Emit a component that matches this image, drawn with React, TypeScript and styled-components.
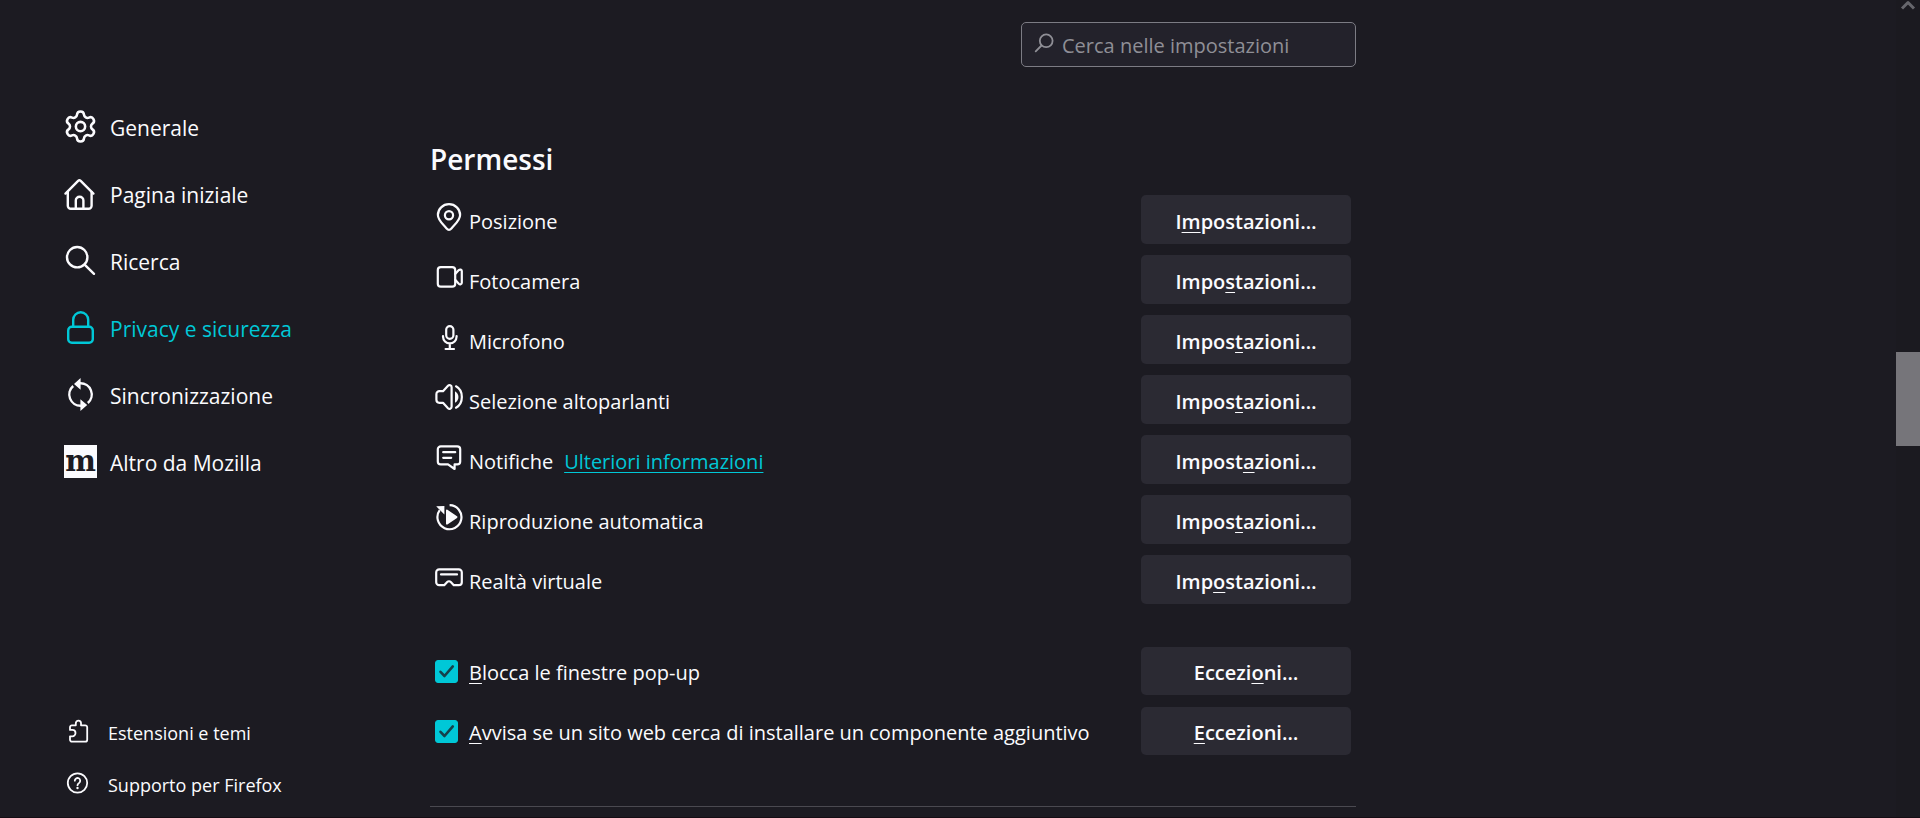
import React from "react";
import styled, { createGlobalStyle } from "styled-components";

const GlobalStyle = createGlobalStyle`
  *, *::before, *::after { box-sizing: border-box; }
  body {
    margin: 0;
    background: #1c1b22;
    color: #fbfbfe;
    font-family: "Open Sans", "Noto Sans", sans-serif;
    font-size: 20px;
    line-height: 28px;
  }
`;

const Page = styled.div`
  display: flex;
  min-height: 100vh;
  border-bottom: 1px solid #150d14;
`;

const Sidebar = styled.aside`
  flex: 0 0 430px;
  display: flex;
  flex-direction: column;
  justify-content: space-between;
  padding: 93px 24px 8px 64px;
`;

const NavList = styled.nav`
  display: flex;
  flex-direction: column;
`;

const NavItem = styled.a<{ $active?: boolean }>`
  display: flex;
  align-items: center;
  gap: 13px;
  height: 67px;
  color: ${(p) => (p.$active ? "#00c8d7" : "inherit")};
  font-size: 21px;
  text-decoration: none;
`;

const FooterItem = styled(NavItem)`
  gap: 18px;
  height: 52px;
  padding-left: 2px;
  font-size: 18px;
`;

const NavLabel = styled.span`
  padding-top: 3px;
`;

const Icon = styled.svg<{ $size: number; $weight?: number }>`
  flex: none;
  display: block;
  width: ${(p) => p.$size}px;
  height: ${(p) => p.$size}px;
  fill: none;
  stroke: currentColor;
  stroke-width: ${(p) => p.$weight ?? 2.4};
  stroke-linecap: round;
  stroke-linejoin: round;
  .solid { fill: currentColor; stroke: none; }
  .butt { stroke-linecap: butt; }
`;

const MozillaMark = styled.span`
  flex: none;
  display: flex;
  justify-content: center;
  width: 33px;
  height: 33px;
  background: #fbfbfe;
  color: #1c1b22;
  font: bold 29px/33px "DejaVu Serif", serif;
`;

const Main = styled.main`
  flex: 0 1 926px;
  min-width: 0;
`;

const TopBar = styled.header`
  display: flex;
  justify-content: flex-end;
  padding-top: 22px;
`;

const SearchBox = styled.label`
  display: flex;
  align-items: center;
  gap: 8px;
  width: 335px;
  height: 45px;
  padding: 0 12px;
  border: 1px solid #7c7c84;
  border-radius: 5px;
  background: #23222b;
  color: #8f8f96;
`;

const SearchIcon = styled(Icon)`
  margin-bottom: 4px;
`;

const SearchInput = styled.input`
  flex: 1;
  min-width: 0;
  padding: 2px 0 0;
  border: 0;
  outline: 0;
  background: transparent;
  color: #fbfbfe;
  font: inherit;
  &::placeholder { color: #8f8f96; opacity: 1; }
`;

const Heading = styled.h2`
  margin: 74px 0 18px;
  font-size: 28px;
  line-height: 36px;
  font-weight: 600;
`;

const Group = styled.section<{ $rowHeight: number }>`
  display: grid;
  grid-auto-rows: ${(p) => p.$rowHeight}px;
  row-gap: ${(p) => 60 - p.$rowHeight}px;
  padding: 0 5px;
  & + & { margin-top: 43px; }
`;

const Row = styled.div`
  display: flex;
  align-items: center;
  justify-content: space-between;
`;

const RowInfo = styled.div`
  display: flex;
  align-items: center;
  gap: 6px;
`;

const RowIcon = styled(Icon)`
  margin-bottom: 5px;
`;

const RowText = styled.span`
  padding-top: 4px;
`;

const MoreLink = styled.a`
  margin-left: 5px;
  padding-top: 4px;
  color: #00c8d7;
  text-decoration: underline;
  text-decoration-thickness: 1px;
  text-underline-offset: 3px;
  text-decoration-skip-ink: none;
`;

const AccessKey = styled.span`
  text-decoration: underline;
  text-decoration-thickness: 1px;
  text-underline-offset: 3px;
  text-decoration-skip-ink: none;
`;

const ActionButton = styled.button`
  flex: none;
  width: 210px;
  height: 100%;
  padding: 4px 0 0;
  border: 0;
  border-radius: 5px;
  background: #2b2a33;
  color: inherit;
  font: inherit;
  font-weight: 600;
`;

const CheckLabel = styled.label`
  display: flex;
  align-items: center;
  gap: 11px;
`;

const CheckFrame = styled.span`
  display: grid;
  width: 23px;
  height: 23px;
  & > * { grid-area: 1 / 1; }
`;

const CheckInput = styled.input`
  appearance: none;
  margin: 0;
  border-radius: 3px;
  border: 1px solid #8f8f9d;
  &:checked { background: #00c8d7; border-color: #00c8d7; }
  &:not(:checked) + svg { visibility: hidden; }
`;

const CheckMark = styled(Icon)`
  color: #15414b;
  pointer-events: none;
`;

const Divider = styled.hr`
  margin: 51px 0 0;
  border: 0;
  border-top: 1px solid #4a4950;
`;

const ScrollTrack = styled.div`
  display: flex;
  flex-direction: column;
  align-items: center;
  width: 24px;
  margin-left: auto;
  background: #1b1a20;
  color: #66666c;
`;

const ScrollSpacer = styled.div`
  flex: 334 0 0;
`;

const ScrollThumb = styled.div`
  flex: 94 0 0;
  width: 100%;
  background: #76757a;
`;

const ScrollRest = styled.div`
  flex: 371 0 0;
`;

const GearIcon = () => (
  <Icon $size={33} $weight={1.7} viewBox="1 1 22 22">
    <path d="M9.671 4.136a2.34 2.34 0 0 1 4.659 0 2.34 2.34 0 0 0 3.319 1.915 2.34 2.34 0 0 1 2.33 4.033 2.34 2.34 0 0 0 0 3.831 2.34 2.34 0 0 1-2.33 4.033 2.34 2.34 0 0 0-3.319 1.915 2.34 2.34 0 0 1-4.659 0 2.34 2.34 0 0 0-3.32-1.915 2.34 2.34 0 0 1-2.33-4.033 2.34 2.34 0 0 0 0-3.831A2.34 2.34 0 0 1 6.35 6.051a2.34 2.34 0 0 0 3.319-1.915" />
    <circle cx="12" cy="12" r="3.1" />
  </Icon>
);

const HomeIcon = () => (
  <Icon $size={33} viewBox="0 0 33 33">
    <path d="M1.5 16.6 14.1 3.9a1.9 1.9 0 0 1 2.6 0L29.4 16.6" />
    <path d="M3.8 15v13.8a3 3 0 0 0 3 3h17.8a3 3 0 0 0 3-3V15" />
    <path d="M11.8 31.8v-8.2a3.8 3.8 0 0 1 7.6 0v8.2" />
  </Icon>
);

const LensIcon = () => (
  <Icon $size={33} viewBox="0 0 33 33">
    <circle cx="13.2" cy="13.2" r="10.2" />
    <path d="m20.6 20.6 9.4 9.2" />
  </Icon>
);

const LockIcon = () => (
  <Icon $size={33} viewBox="0 0 33 33">
    <rect x="4.2" y="15.8" width="24.6" height="16" rx="3.6" />
    <path d="M9.2 15.8V8.8a7.5 7.5 0 0 1 15 0v7" />
  </Icon>
);

const SyncIcon = () => (
  <Icon $size={33} viewBox="0 0 33 33">
    <path className="butt" d="M9.2 8A11.2 11.2 0 0 0 17 27.7" />
    <path className="butt" d="M23.8 25A11.2 11.2 0 0 0 16 5.3" />
    <path className="solid" d="M10 5.9 16.6 0v11.8zM23.2 27.1 16.4 33V21.2z" />
  </Icon>
);

const PuzzleIcon = () => (
  <Icon $size={24} $weight={1.8} viewBox="0 0 24 24">
    <path d="M4 10V8.200a1.900 1.900 0 0 1 1.900-1.900h3.900V4.200a2.600 2.600 0 0 1 5.200 0v2.100h4.200a2 2 0 0 1 2 2v12.400a2 2 0 0 1-2 2H6a2 2 0 0 1-2-2v-3.400h2.300a2.900 2.900 0 0 0 0-6.400H4z" />
  </Icon>
);

const HelpIcon = () => (
  <Icon $size={24} $weight={1.8} viewBox="0 0 24 24">
    <circle cx="11.500" cy="12" r="9.700" />
    <path d="M8.800 9.700a2.700 2.700 0 1 1 4.300 2.200c-1 .7-1.600 1.200-1.600 2.300" />
    <circle className="solid" cx="11.500" cy="17" r="1.200" />
  </Icon>
);

const rowIcons = {
  pin: (
    <>
      <path d="M14 26.800c-1 0-1.700-.5-2.400-1.300C7.800 21 2.900 17.200 2.900 12A11.100 10.800 0 0 1 25.100 12c0 5.200-4.900 9-8.700 13.500-.7.800-1.400 1.300-2.400 1.300z" />
      <circle cx="14" cy="12.200" r="4.100" />
    </>
  ),
  camera: (
    <>
      <rect x="2.800" y="4.100" width="17.400" height="19.600" rx="3" />
      <path d="m20.200 11 3.600-3.900c1.200-1.100 3-.5 3 1v11.600c0 1.500-1.800 2.100-3 1l-3.600-3.900" />
    </>
  ),
  mic: (
    <>
      <rect x="11.200" y="3.200" width="7.200" height="12.600" rx="3.600" />
      <path d="M8 13v.6a6.800 6.800 0 0 0 13.600 0V13M14.800 20.600V26M10.600 26h8.400" />
    </>
  ),
  speaker: (
    <>
      <path d="M1.400 11.200a3 3 0 0 1 3-3H8l5-5.400c1.300-1.300 3.600-.5 3.600 1.400v19.600c0 1.900-2.300 2.700-3.600 1.400l-5-5.400H4.400a3 3 0 0 1-3-3z" />
      <path d="M21 3.300c7.800 4.200 7.800 17.200 0 21.400" />
      <path className="solid" d="M20 8.200c4.600 2.800 4.600 8.800 0 11.600z" />
    </>
  ),
  chat: (
    <>
      <path d="M5.800 3.300h16.400a3 3 0 0 1 3 3v12.100a3 3 0 0 1-3 3h-2.600V26l-6.600-4.600H5.800a3 3 0 0 1-3-3V6.300a3 3 0 0 1 3-3z" />
      <path d="M8.200 9.200h12M8.200 14.800h8" />
    </>
  ),
  autoplay: (
    <>
      <path className="butt" d="M14.600 2.200A12 12 0 1 1 4.700 7.200" />
      <path className="solid" d="M1.200 3.300 9.400 3v8.600zM11 7.500v13.200c0 .8.700 1.100 1.400.7l9.600-6.500c.6-.4.600-1.200 0-1.600l-9.600-6.500c-.7-.4-1.400-.1-1.400.7z" />
    </>
  ),
  vr: (
    <>
      <path d="M4.200 6.400h19.600a3 3 0 0 1 3 3v9.800a3 3 0 0 1-3 3h-5l-3-3.200c-1-1-2.600-1-3.600 0l-3 3.200h-5a3 3 0 0 1-3-3V9.400a3 3 0 0 1 3-3z" />
      <path d="M6 11.400h16" />
    </>
  ),
};

type Permission = {
  icon: keyof typeof rowIcons;
  label: string;
  keyIndex: number;
  link?: string;
};

const permissions: Permission[] = [
  { icon: "pin", label: "Posizione", keyIndex: 1 },
  { icon: "camera", label: "Fotocamera", keyIndex: 4 },
  { icon: "mic", label: "Microfono", keyIndex: 5 },
  { icon: "speaker", label: "Selezione altoparlanti", keyIndex: 5 },
  { icon: "chat", label: "Notifiche", keyIndex: 6, link: "Ulteriori informazioni" },
  { icon: "autoplay", label: "Riproduzione automatica", keyIndex: 5 },
  { icon: "vr", label: "Realtà virtuale", keyIndex: 3 },
];

const blockers = [
  { label: "Blocca le finestre pop-up", keyIndex: 6 },
  { label: "Avvisa se un sito web cerca di installare un componente aggiuntivo", keyIndex: 0 },
];

const Keyed = ({ text, index }: { text: string; index: number }) => (
  <>
    {text.slice(0, index)}
    <AccessKey>{text[index]}</AccessKey>
    {text.slice(index + 1)}
  </>
);

const navItems = [
  { label: "Generale", icon: <GearIcon /> },
  { label: "Pagina iniziale", icon: <HomeIcon /> },
  { label: "Ricerca", icon: <LensIcon /> },
  { label: "Privacy e sicurezza", icon: <LockIcon />, active: true },
  { label: "Sincronizzazione", icon: <SyncIcon /> },
  { label: "Altro da Mozilla", icon: <MozillaMark aria-hidden="true">m</MozillaMark> },
];

export default function App() {
  return (
    <>
      <GlobalStyle />
      <Page>
        <Sidebar>
          <NavList>
            {navItems.map((item) => (
              <NavItem key={item.label} href="#" $active={item.active}>
                {item.icon}
                <NavLabel>{item.label}</NavLabel>
              </NavItem>
            ))}
          </NavList>
          <NavList>
            <FooterItem href="#">
              <PuzzleIcon />
              <NavLabel>Estensioni e temi</NavLabel>
            </FooterItem>
            <FooterItem href="#">
              <HelpIcon />
              <NavLabel>Supporto per Firefox</NavLabel>
            </FooterItem>
          </NavList>
        </Sidebar>

        <Main>
          <TopBar>
            <SearchBox>
              <SearchIcon $size={20} $weight={1.8} viewBox="0 0 20 20">
                <circle cx="12.200" cy="7.800" r="6.400" />
                <path d="m7.500 12.500-5.800 5.800" />
              </SearchIcon>
              <SearchInput type="search" placeholder="Cerca nelle impostazioni" aria-label="Cerca nelle impostazioni" />
            </SearchBox>
          </TopBar>

          <Heading>Permessi</Heading>

          <Group $rowHeight={49}>
            {permissions.map((p) => (
              <Row key={p.label}>
                <RowInfo>
                  <RowIcon $size={28} $weight={2.2} viewBox="0 0 28 28">
                    {rowIcons[p.icon]}
                  </RowIcon>
                  <RowText>{p.label}</RowText>
                  {p.link && <MoreLink href="#">{p.link}</MoreLink>}
                </RowInfo>
                <ActionButton type="button">
                  <Keyed text="Impostazioni…" index={p.keyIndex} />
                </ActionButton>
              </Row>
            ))}
          </Group>

          <Group $rowHeight={48}>
            {blockers.map((b) => (
              <Row key={b.label}>
                <CheckLabel>
                  <CheckFrame>
                    <CheckInput type="checkbox" defaultChecked />
                    <CheckMark $size={23} $weight={2.6} viewBox="0 0 23 23">
                      <path d="m5.500 11.800 4 4.200 8.300-9.600" />
                    </CheckMark>
                  </CheckFrame>
                  <RowText>
                    <Keyed text={b.label} index={0} />
                  </RowText>
                </CheckLabel>
                <ActionButton type="button">
                  <Keyed text="Eccezioni…" index={b.keyIndex} />
                </ActionButton>
              </Row>
            ))}
          </Group>

          <Divider />
        </Main>

        <ScrollTrack aria-hidden="true">
          <Icon $size={18} $weight={3} viewBox="0 0 18 18">
            <path className="butt" d="M3 8.500 9 2.500l6 6" />
          </Icon>
          <ScrollSpacer />
          <ScrollThumb />
          <ScrollRest />
        </ScrollTrack>
      </Page>
    </>
  );
}
